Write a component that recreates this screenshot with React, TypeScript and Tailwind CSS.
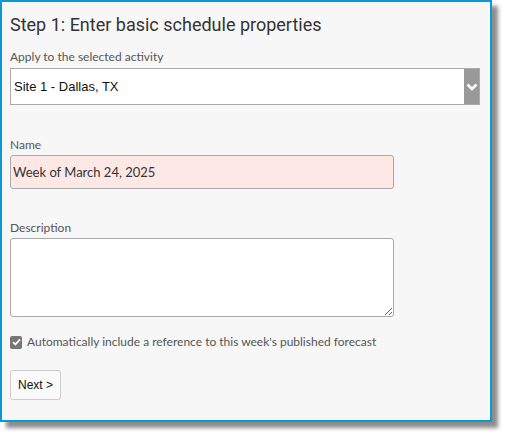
import { useState } from "react";

export default function App() {
  const [checked, setChecked] = useState(true);

  return (
    <div className="min-h-screen bg-white">
      <div className="w-[492px] h-[422px] bg-[#f7f7f7] border-2 border-[#0a98d8] shadow-[6px_6px_4px_rgba(0,0,0,0.45)] px-[8px] pt-[11px]">
        {/* Header */}
        <h1 className="text-[18px] leading-[24px] text-[#333] font-[Roboto,sans-serif]">
          Step 1: Enter basic schedule properties
        </h1>

        {/* Activity select */}
        <label className="block mt-[12px] text-[12px] leading-[16px] text-[#555] font-[Lato,sans-serif]">
          Apply to the selected activity
        </label>
        <div className="mt-[3px] w-[470px] h-[37px] flex bg-white border border-[#aaa]">
          <div className="flex-1 flex items-center pl-[3px] text-[13px] text-[#111] font-['Liberation_Sans',Arial,sans-serif]">
            Site 1 - Dallas, TX
          </div>
          <div className="w-[15px] bg-[#999] flex items-center justify-center">
            <svg width="12" height="8" viewBox="0 0 12 8">
              <path d="M1.5 1.5 L6 6 L10.5 1.5" stroke="white" strokeWidth="2.5" fill="none" />
            </svg>
          </div>
        </div>

        {/* Name */}
        <label className="block mt-[32px] text-[12px] leading-[16px] text-[#555] font-[Lato,sans-serif]">
          Name
        </label>
        <input
          defaultValue="Week of March 24, 2025"
          className="mt-[2px] block w-[384px] h-[34px] px-[2px] bg-[#fde8e6] border border-[#aaa] rounded-[3px] text-[13px] text-[#333] outline-none font-[Lato,sans-serif]"
        />

        {/* Description */}
        <label className="block mt-[31px] text-[12px] leading-[16px] text-[#555] font-[Lato,sans-serif]">
          Description
        </label>
        <textarea className="mt-[2px] block w-[384px] h-[79px] bg-white border border-[#aaa] rounded-[3px] outline-none" />

        {/* Forecast checkbox */}
        <label className="mt-[17px] flex items-center gap-[5px] cursor-pointer" onClick={() => setChecked(!checked)}>
          <span className="w-[12px] h-[13px] rounded-[2px] bg-[#767676] flex items-center justify-center">
            {checked && (
              <svg width="9" height="8" viewBox="0 0 9 8">
                <path d="M1 4.2 L3.4 6.5 L8 1.3" stroke="white" strokeWidth="1.8" fill="none" />
              </svg>
            )}
          </span>
          <span className="text-[12px] leading-[16px] text-[#555] font-[Lato,sans-serif]">
            Automatically include a reference to this week's published forecast
          </span>
        </label>

        {/* Next */}
        <button className="mt-[20px] block h-[30px] px-[7px] bg-[#fafafa] border border-[#ccc] rounded-[3px] text-[12px] text-[#111] font-['Liberation_Sans',Arial,sans-serif]">
          Next &gt;
        </button>
      </div>
    </div>
  );
}
